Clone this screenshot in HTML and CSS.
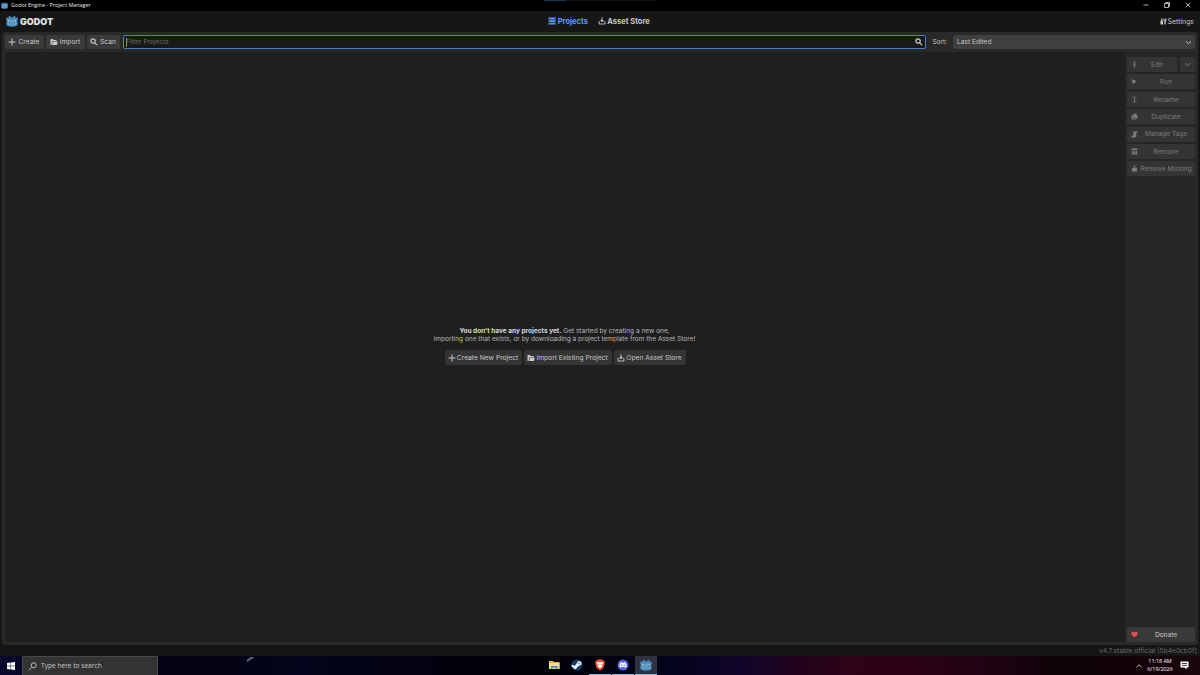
FILE: index.html
```html
<!DOCTYPE html>
<html lang="en">
<head>
    <meta charset="UTF-8">
    <meta name="viewport" content="width=device-width, initial-scale=1.0">
    <title>Godot Engine - Project Manager</title>
    <link rel="stylesheet" href="styles.css">
</head>
<body>

<!-- shared icons -->
<svg class="defs" width="0" height="0">
    <symbol id="godot" viewBox="0 0 16 16">
        <path fill="#478cbf" d="M5.500 1l1 2h3l1-2 2 .7-.1 2h1L15 3l1 2-.7 2v6.500Q12 15.500 8 15.500T.7 13.500V7L0 5l1-2 1.600.700h1L3.500 1.700z"/>
        <path fill="#b9d5ea" d="M1 10.500h2.500l.5 1.500h2.500l.5-1h2l.5 1h2.500l.5-1.500H15v.8h-1.500l-.5 1.500H9l-.5-1h-1l-.5 1H3l-.5-1.500H1z" opacity=".6"/>
        <circle cx="4.500" cy="8" r="1.700" fill="#b4cfe2"/>
        <circle cx="11.500" cy="8" r="1.700" fill="#b4cfe2"/>
        <circle cx="4.700" cy="8.100" r=".8" fill="#414042"/>
        <circle cx="11.300" cy="8.100" r=".8" fill="#414042"/>
        <path fill="#b4cfe2" d="M7.500 7.500h1v2.300h-1z"/>
    </symbol>
    <symbol id="add" viewBox="0 0 16 16">
        <path d="M7 1h2v6h6v2H9v6H7V9H1V7h6z"/>
    </symbol>
    <symbol id="load" viewBox="0 0 16 16">
        <path d="M1 2h5l1 2h6v2H5L3 14H1z"/>
        <path d="M6 7h9.500L14 14H4z"/>
    </symbol>
    <symbol id="search" viewBox="0 0 16 16">
        <path fill="none" stroke="currentColor" stroke-width="2.400" d="M9.200 9.200l5 5M10.500 6a4.300 4.300 0 1 1-8.600 0 4.300 4.300 0 0 1 8.600 0z"/>
    </symbol>
    <symbol id="download" viewBox="0 0 16 16">
        <path d="M7 1h2v5h3l-4 4.500L4 6h3z"/>
        <path fill="none" stroke="currentColor" stroke-width="1.800" d="M3.500 9H2v5h12V9h-1.500"/>
    </symbol>
    <symbol id="chevron" viewBox="0 0 16 16">
        <path fill="none" stroke="currentColor" stroke-width="2.200" stroke-linecap="round" stroke-linejoin="round" d="M3 6l5 4.500L13 6"/>
    </symbol>
</svg>

<div class="titlebar">
    <svg class="app-icon"><use href="#godot"/></svg>
    <span class="window-title">Godot Engine - Project Manager</span>
    <div class="edge-glow"></div>
    <div class="window-buttons">
        <svg viewBox="0 0 6 6"><path d="M.5 3h5"/></svg>
        <svg viewBox="0 0 6 6"><path d="M.5 1.500h4v4h-4zM1.700 1.500V.5h3.800v3.800h-1"/></svg>
        <svg viewBox="0 0 6 6"><path d="M.7.700l4.600 4.600M5.300.700L.7 5.300"/></svg>
    </div>
</div>

<header>
    <div class="brand">
        <svg><use href="#godot"/></svg>
        <span>GODOT</span>
    </div>
    <nav>
        <a class="tab active">
            <svg viewBox="0 0 16 16"><path d="M1 1h14v4H1zM1 6.500h14v3.500H1zM1 11.500h14V15H1z"/><path fill="#161616" d="M3 2.500h1.500v1H3zM3 7.700h1.500v1H3zM3 12.700h1.500v1H3z"/></svg>
            Projects
        </a>
        <a class="tab">
            <svg><use href="#download"/></svg>
            Asset Store
        </a>
    </nav>
    <div class="settings">
        <svg viewBox="0 0 16 16"><path d="M2.500 1h3v4.500h-3zM1 6.500h6V15H1zM8 1h2v4h2V1h2.500v5L13 8v7h-3V8L8 6z"/></svg>
        Settings
    </div>
</header>

<main>
    <div class="toolbar">
        <button class="btn create"><svg><use href="#add"/></svg>Create</button>
        <button class="btn import"><svg><use href="#load"/></svg>Import</button>
        <button class="btn scan"><svg><use href="#search"/></svg>Scan</button>
        <div class="filter">
            <span class="caret"></span>
            <span class="placeholder">Filter Projects</span>
            <svg><use href="#search"/></svg>
        </div>
        <span class="sort-label">Sort:</span>
        <div class="sort">
            <span>Last Edited</span>
            <svg><use href="#chevron"/></svg>
        </div>
    </div>

    <div class="content">
        <section class="project-list">
            <p><b>You don't have any projects yet.</b> Get started by creating a new one,<br>importing one that exists, or by downloading a project template from the Asset Store!</p>
            <div class="empty-actions">
                <button class="btn new-project"><svg><use href="#add"/></svg>Create New Project</button>
                <button class="btn import-existing"><svg><use href="#load"/></svg>Import Existing Project</button>
                <button class="btn open-store"><svg><use href="#download"/></svg>Open Asset Store</button>
            </div>
        </section>

        <aside>
            <div class="edit-row">
                <button class="side-btn"><svg viewBox="0 0 16 16"><path d="M6 1h4v3H6zM6 5h4v7l-2 3.500L6 12z"/></svg><span>Edit</span></button>
                <button class="side-btn more"><svg><use href="#chevron"/></svg></button>
            </div>
            <button class="side-btn"><svg viewBox="0 0 16 16"><path d="M3 2.500L13 8 3 13.500z"/></svg><span>Run</span></button>
            <button class="side-btn"><svg viewBox="0 0 16 16"><path d="M3.500 1.500h9v2H9v9h3.500v2h-9v-2H7v-9H3.500z"/></svg><span>Rename</span></button>
            <button class="side-btn"><svg viewBox="0 0 16 16"><path d="M5.500 1H11v4h4v7.500H5.500z"/><path d="M12 1l3 3h-3zM1.500 4.500h3v9H12V15H1.500z"/></svg><span>Duplicate</span></button>
            <button class="side-btn"><svg viewBox="0 0 16 16"><path d="M6 1h9v3.500h-3V13l-2 2H1v-4h4V3z"/></svg><span>Manage Tags</span></button>
            <button class="side-btn"><svg viewBox="0 0 16 16"><path d="M1 1h14v3.500H1z"/><path fill-rule="evenodd" d="M2 6h12v9H2zM4.700 8v1h6.600V8zM4.700 11v1h6.600v-1z"/></svg><span>Remove</span></button>
            <button class="side-btn"><svg viewBox="0 0 16 16"><path d="M6.500 1h3v5H13l1.500 9h-13L3 6h3.500z"/></svg><span>Remove Missing</span></button>
            <button class="side-btn donate"><svg viewBox="0 0 16 16"><path d="M8 15L1.500 8.500C-1.500 4 4 -.5 8 3.500c4-4 9.500.500 6.500 5z"/></svg><span>Donate</span></button>
        </aside>
    </div>
</main>

<footer>v4.7.stable.official [5b4e0cb0f]</footer>

<div class="taskbar">
    <div class="start">
        <svg viewBox="0 0 9 9"><path d="M0 1.200L4 .6v3.600H0zM4.500.5L9 0v4.200H4.500zM0 4.700h4v3.600L0 7.800zM4.500 4.700H9V9l-4.500-.6z"/></svg>
    </div>
    <div class="task-search">
        <svg viewBox="0 0 9 9"><path d="M3.500 5.500L.8 8.300M8.200 3.300a2.500 2.500 0 1 1-5 0 2.500 2.500 0 0 1 5 0z"/></svg>
        <span>Type here to search</span>
    </div>
    <div class="wallpaper-speck"></div>
    <div class="apps">
        <div class="app">
            <svg viewBox="0 0 12 12"><path fill="#e8b83c" d="M1 2h4l1 1h5.500v7H1z"/><path fill="#f8dc80" d="M1 4h10.500v6H1z"/><path fill="#3f91c9" d="M3 7h6.500v3H8V8.700H4.500V10H3z"/></svg>
        </div>
        <div class="app">
            <svg viewBox="0 0 12 12"><circle cx="6" cy="6" r="5.500" fill="#123a63"/><path fill="#e9eef3" d="M.6 5.500l3.200 1.300L6 4a2.300 2.300 0 1 1 2.500 2.600L5.900 8.600A1.800 1.800 0 0 1 2.300 8.500L.7 7.700z"/><circle cx="8.100" cy="4.400" r="1.100" fill="#8fa3b8"/></svg>
        </div>
        <div class="app open">
            <svg viewBox="0 0 12 12"><path fill="#f0492b" d="M3.500.500h5l1 1.200 1.300.3-.3 1.500.3 1L9.500 9 6 11.700 2.500 9 1.200 4.500l.3-1L1.200 2l1.300-.3z"/><path fill="#fff" d="M3 3l1.500.3L6 3l1.500.3L9 3l.4 1.500L8 6.500l.3 1L6 9.500 3.700 7.500l.3-1-1.400-2z"/><path fill="#f0492b" d="M4 4.500l1.300.5-.3 1.500zM8 4.500L6.700 5 7 6.500z"/></svg>
        </div>
        <div class="app open">
            <svg viewBox="0 0 12 12"><circle cx="6" cy="6" r="5.500" fill="#5560e8"/><path fill="#fff" d="M3.500 3.600l1.500-.4.3.5h1.400l.3-.5 1.500.4Q9.700 5.500 9.600 7.900L8 8.700l-.5-.8h-3l-.5.8-1.600-.8Q2.300 5.500 3.500 3.600z"/><circle cx="4.700" cy="6.200" r=".8" fill="#5560e8"/><circle cx="7.300" cy="6.200" r=".8" fill="#5560e8"/></svg>
        </div>
        <div class="app open current">
            <svg><use href="#godot"/></svg>
        </div>
    </div>
    <div class="tray">
        <svg class="tray-up" viewBox="0 0 6 6"><path d="M.4 4.500L3 1.700l2.600 2.800"/></svg>
        <div class="clock">11:18 AM<br>6/19/2026</div>
        <svg class="notifications" viewBox="0 0 9 9"><path fill="#fff" d="M.5.500h8v6h-2v2l-2-2h-4z"/><path stroke="#1a0510" stroke-width=".8" d="M2 2.500h5M2 4.400h5"/></svg>
    </div>
</div>

</body>
</html>
```
FILE: styles.css
```css
* {
    box-sizing: border-box;
}

body {
    font-family: Inter, "Open Sans", sans-serif;
    font-size: 6.7px;
    margin: 0;
    width: 1200px;
    height: 675px;
    overflow: hidden;
    display: flex;
    flex-direction: column;
    background-color: #161616;
    color: #c8c8c8;
}

svg {
    width: 8px;
    height: 8px;
    flex: none;
    fill: currentColor;
}

.defs {
    position: absolute;
}

button {
    font: inherit;
    color: inherit;
    border: none;
    padding: 0;
    white-space: nowrap;
}

/* window title bar */
.titlebar {
    position: relative;
    height: 11px;
    flex: none;
    display: flex;
    align-items: center;
    padding: 0 9px 1px 1px;
    background-color: #000;
    color: #e8e8e8;
    font-family: "Open Sans", sans-serif;
    font-size: 5.4px;
}

.app-icon {
    width: 7px;
    height: 7px;
    margin-right: 3px;
}

.edge-glow {
    position: absolute;
    left: 544px;
    top: 0;
    width: 113px;
    height: 1px;
    background: linear-gradient(to right, #16384f 22px, #0a121b 22px);
}

.window-buttons {
    display: flex;
    gap: 15px;
    margin-left: auto;
}

.window-buttons svg {
    width: 6px;
    height: 6px;
    fill: none;
    stroke: #ddd;
    stroke-width: 0.8;
}

/* header */
header {
    height: 21px;
    flex: none;
    display: grid;
    grid-template-columns: 1fr auto 1fr;
    align-items: center;
    padding: 0 6px 1px;
}

.brand {
    display: flex;
    align-items: center;
    gap: 2px;
    font-size: 9px;
    font-weight: 900;
    color: #e0e0e0;
}

.brand svg {
    width: 12px;
    height: 12px;
}

nav {
    display: flex;
    gap: 10px;
    padding-right: 2px;
    font-size: 7.5px;
    font-weight: 700;
}

.tab {
    display: flex;
    align-items: center;
    gap: 1.5px;
}

.tab.active {
    color: #5b9cf5;
}

.settings {
    display: flex;
    align-items: center;
    justify-content: flex-end;
    gap: 1px;
    font-size: 6.9px;
}

.settings svg {
    width: 7px;
    height: 7px;
}

/* main panel */
main {
    height: 613px;
    flex: none;
    display: flex;
    flex-direction: column;
    margin: 0 2px;
    padding: 3px;
    background-color: #292929;
    border-radius: 3px;
}

.toolbar {
    height: 14px;
    flex: none;
    display: flex;
    align-items: stretch;
}

.btn {
    display: flex;
    align-items: center;
    justify-content: center;
    gap: 2px;
    margin-right: 2px;
    background-color: #3a3a3a;
    border-radius: 2px;
}

.create {
    width: 39px;
    padding-right: 1px;
}

.import {
    width: 39px;
    padding-right: 1px;
}

.scan {
    width: 33px;
    margin-right: 3px;
    padding-right: 1px;
}

.filter {
    flex: 1;
    display: flex;
    align-items: center;
    padding: 0 2px;
    background-color: #191919;
    border: 1px solid #4a80c8;
    border-radius: 2px;
    color: #6c6c6c;
    font-size: 6.6px;
}

.caret {
    width: 1px;
    height: 9px;
    margin-right: -1px;
    background-color: #8a8a8a;
}

.filter svg {
    width: 8px;
    height: 8px;
    margin-left: auto;
    color: #d0d0d0;
}

.sort-label {
    align-self: center;
    margin: 0 6px;
    font-size: 6.5px;
}

.sort {
    width: 242px;
    display: flex;
    align-items: center;
    justify-content: space-between;
    padding: 0 3px 0 4px;
    background-color: #3f3f3f;
    border-radius: 2px;
    font-size: 6.6px;
}

.sort svg {
    width: 7px;
    height: 7px;
}

.content {
    flex: 1;
    display: flex;
    margin-top: 3px;
}

.project-list {
    flex: 1;
    display: flex;
    flex-direction: column;
    align-items: center;
    padding-top: 276px;
    background-color: #1f1f1f;
    border-radius: 2px 0 0 2px;
    text-align: center;
}

.project-list p {
    margin: 0;
    padding-right: 1px;
    line-height: 7.7px;
    font-size: 6.54px;
    color: #b8b8b8;
}

.project-list b {
    color: #d8d8d8;
}

.empty-actions {
    display: flex;
    height: 15px;
    margin-top: 7px;
}

.empty-actions .btn {
    gap: 1px;
    background-color: #343434;
}

.new-project {
    width: 77px;
}

.import-existing {
    width: 88px;
}

.empty-actions .open-store {
    width: 72px;
    margin-right: 0;
}

/* side actions */
aside {
    width: 70px;
    display: flex;
    flex-direction: column;
    gap: 2.4px;
    padding: 5px 0 0 2px;
    background-color: #262626;
}

.edit-row {
    display: flex;
    gap: 3px;
}

.edit-row .side-btn {
    flex: 1;
}

.side-btn {
    height: 15px;
    display: flex;
    align-items: center;
    padding: 0 3px 0 4px;
    background-color: #343434;
    border-radius: 1.5px;
    color: #7c7c7c;
    font-size: 6.6px;
}

.side-btn svg {
    width: 7px;
    height: 7px;
}

.side-btn span {
    flex: 1;
    padding: 0.5px 0 0 2px;
    text-align: center;
}

.edit-row .more {
    flex: none;
    width: 15px;
}

.donate {
    margin-top: auto;
    background-color: #393939;
    color: #c8c8c8;
}

.donate svg {
    color: #e84c55;
}

footer {
    height: 11px;
    flex: none;
    padding: 0.5px 3px 0 0;
    line-height: 11px;
    text-align: right;
    font-size: 6.65px;
    color: #6a6a6a;
}

/* windows taskbar */
.taskbar {
    position: relative;
    height: 19px;
    flex: none;
    display: flex;
    background: linear-gradient(to right, #08082c 0, #020210 200px, #04041c 300px, #020212 400px, #020208 540px, #03031a 665px, #10052a 740px, #22031c 800px, #2e0318 850px, #2c0217 910px, #220214 980px, #0e0308 1060px, #100207 1110px, #1a040e 1200px);
    font-family: "Open Sans", sans-serif;
    color: #fff;
}

.start {
    width: 22px;
    display: flex;
    align-items: center;
    justify-content: center;
}

.task-search {
    width: 136px;
    display: flex;
    align-items: center;
    gap: 4px;
    padding: 0 0 0 5px;
    background-color: #333;
    border: 1px solid #484848;
    border-bottom: none;
    font-size: 6.6px;
    color: #c8c8c8;
}

.task-search svg {
    width: 9px;
    height: 9px;
    fill: none;
    stroke: #ddd;
    stroke-width: 0.8;
}

.task-search span {
    padding-bottom: 1px;
}

.wallpaper-speck {
    position: absolute;
    left: 247px;
    top: 1px;
    width: 7px;
    height: 5px;
    background: linear-gradient(145deg, transparent 20%, #77778c 40%, transparent 62%);
}

.apps {
    display: flex;
    gap: 1px;
    margin-left: 385px;
}

.app {
    width: 22px;
    display: flex;
    align-items: center;
    justify-content: center;
    padding-bottom: 1px;
}

.app svg {
    width: 12px;
    height: 12px;
}

.app.open {
    border-bottom: 1px solid #8ab6e0;
    padding-bottom: 0;
}

.app.current {
    background-color: #31323f;
}

.tray {
    display: flex;
    align-items: center;
    margin-left: auto;
    padding: 0 11px 0 0;
}

.tray-up {
    width: 6px;
    height: 6px;
    fill: none;
    stroke: #ddd;
    stroke-width: 0.8;
}

.clock {
    width: 38px;
    padding: 0 2px 1px 0;
    line-height: 8.5px;
    text-align: center;
    font-size: 5.4px;
}

.notifications {
    width: 9px;
    height: 9px;
}
```
